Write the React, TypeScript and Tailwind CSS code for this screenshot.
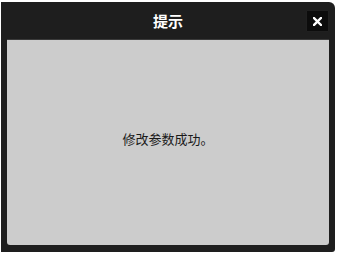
export default function App() {
  return (
    <div className="h-[254px] w-[338px] bg-white pl-[1px] pt-[2px]">
      <div
        className="flex h-[250px] w-[334px] flex-col rounded-tr-[6px] rounded-br-[3px] bg-[#1e1e1e] px-[6px] pb-[7px]"
        style={{ fontFamily: '"Noto Sans CJK SC", "Liberation Sans", sans-serif' }}
      >
        <div className="relative flex h-[37px] shrink-0 items-center justify-center">
          <span className="text-[15px] font-bold leading-none text-white">提示</span>
          <button className="absolute right-[1px] top-[9px] flex h-[20px] w-[21px] items-center justify-center bg-[#0c0c0c] shadow-[0_0_1px_#333]">
            <svg width="9" height="9" viewBox="0 0 9 9">
              <path d="M1 1L8 8M8 1L1 8" stroke="white" strokeWidth="2.4" strokeLinecap="square" />
            </svg>
          </button>
        </div>
        <div className="flex flex-1 items-center justify-center rounded-bl-[3px] rounded-br-[3px] border-t border-[#3a3a3a] bg-[#cccccc] pb-[8px]">
          <span className="text-[13px] leading-none text-[#1a1a1a]">修改参数成功。</span>
        </div>
      </div>
    </div>
  );
}
